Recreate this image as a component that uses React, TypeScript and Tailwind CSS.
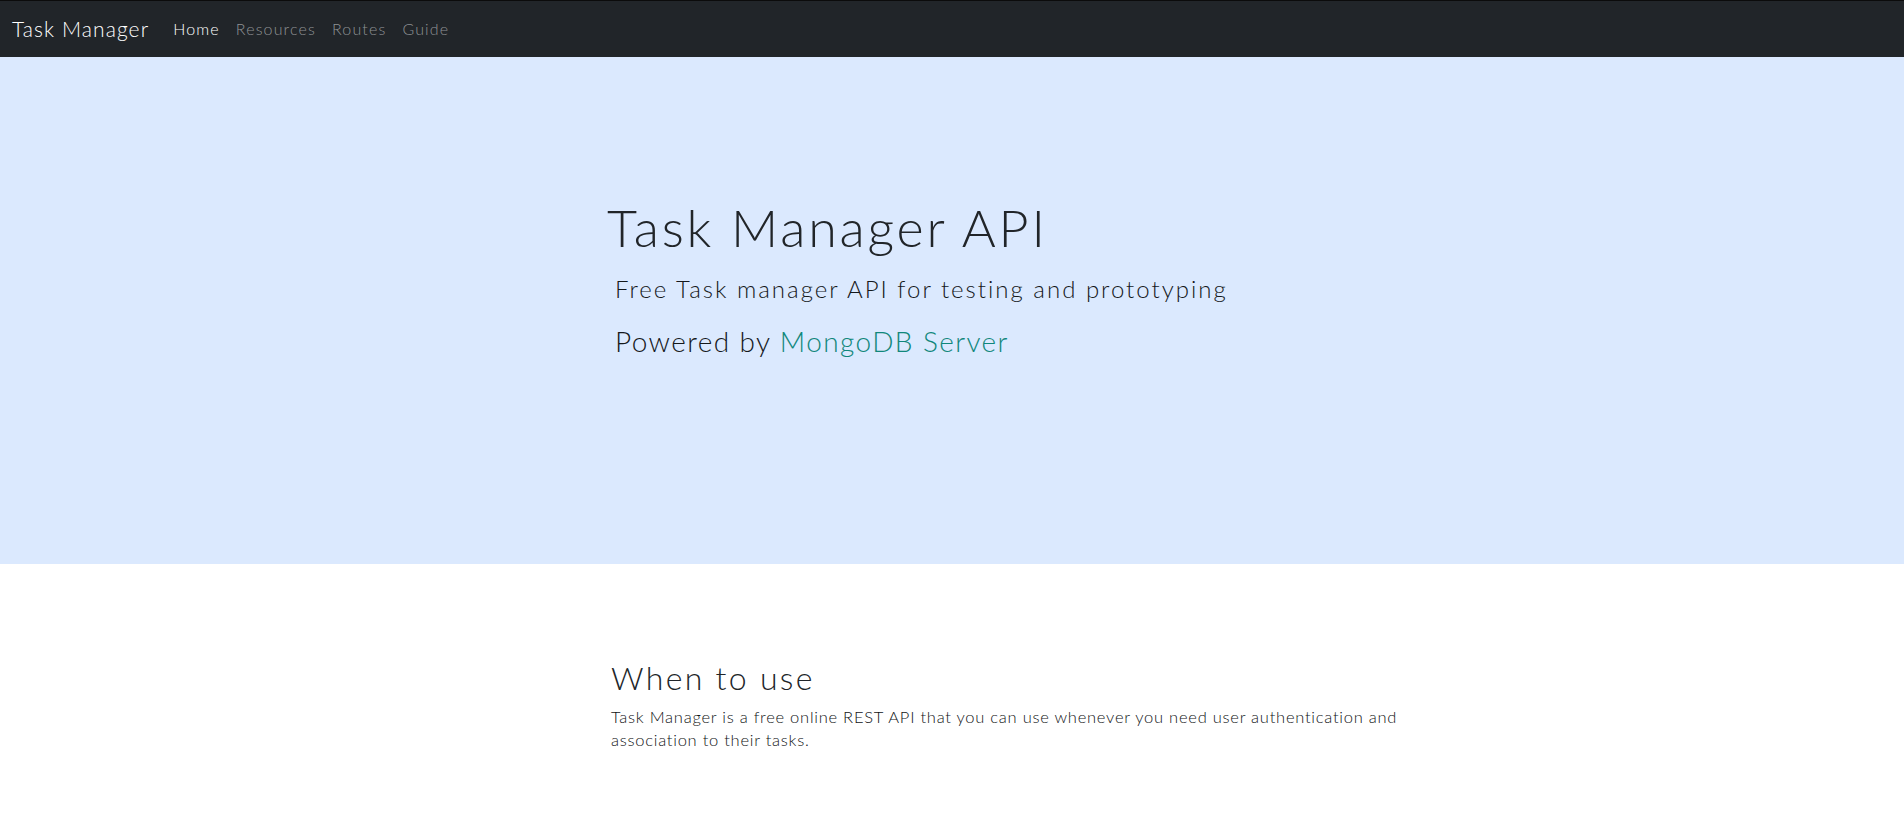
import React from "react";

export default function App() {
  const font = { fontFamily: "Lato, 'Noto Sans', sans-serif" };
  return (
    <div className="min-h-[815px] bg-white text-[#212529]" style={font}>
      <nav className="h-[57px] bg-[#212529] border-t border-[#0b0b0b] flex items-center pl-[12px]">
        <a className="text-[21px] leading-[30px] font-light text-white mr-[16px] tracking-[1.1px]">Task Manager</a>
        <div className="flex items-center text-[16px] font-light tracking-[1.15px]">
          <a className="px-[8px] text-white">Home</a>
          <a className="px-[8px] text-[#8e9194]">Resources</a>
          <a className="px-[8px] text-[#8e9194]">Routes</a>
          <a className="px-[8px] text-[#8e9194]">Guide</a>
        </div>
      </nav>
      <section className="h-[507px] bg-[#dbe9fe] pt-[140px]">
        <div className="ml-[607px] flex flex-col">
          <h1 className="text-[52px] leading-[60px] font-light tracking-[2.8px]">Task Manager API</h1>
          <p className="ml-[8px] mt-[16px] text-[24px] leading-[32px] font-light tracking-[2px] text-[#15181b]">
            Free Task manager API for testing and prototyping
          </p>
          <p className="ml-[8px] mt-[18px] text-[28px] leading-[36px] font-light tracking-[1.4px] text-[#15181b]">
            Powered by <span className="text-[#10877b]">MongoDB Server</span>
          </p>
        </div>
      </section>
      <section className="pt-[94px] ml-[611px] w-[820px]">
        <h2 className="text-[32px] leading-[40px] font-light tracking-[2.3px]">When to use</h2>
        <p className="mt-[8px] text-[16.5px] leading-[23px] font-light tracking-[0.75px] text-[#111315]">
          Task Manager is a free online REST API that you can use whenever you need user authentication and
          association to their tasks.
        </p>
      </section>
    </div>
  );
}
